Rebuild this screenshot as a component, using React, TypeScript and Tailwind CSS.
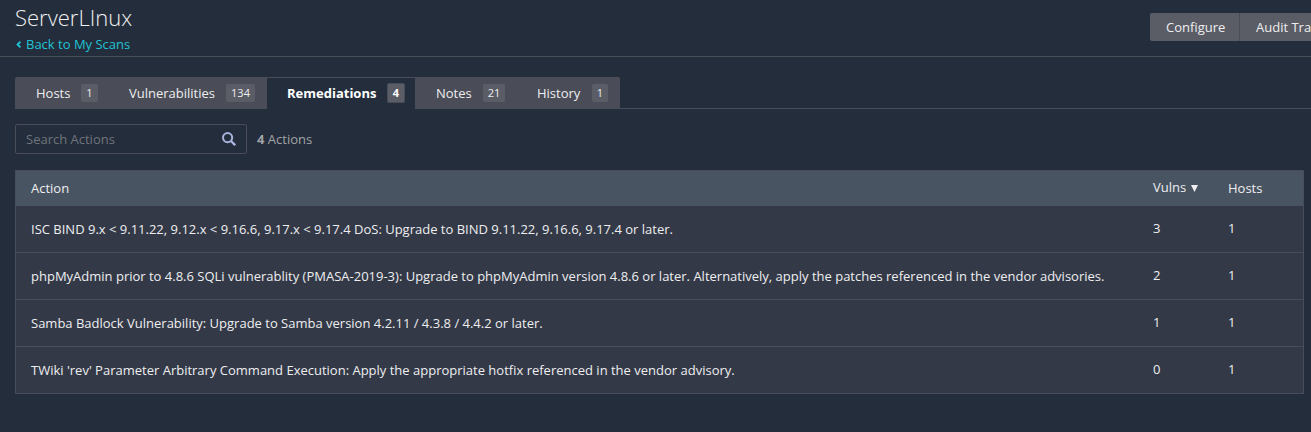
type Tab = { label: string; count: number; active?: boolean; box: string; badge: string };

const tabs: Tab[] = [
  { label: 'Hosts', count: 1, box: 'w-[94px] pl-[21px] rounded-tl-[2px]', badge: 'w-[17px] mr-[11px]' },
  { label: 'Vulnerabilities', count: 134, box: 'w-[158px] pl-[20px]', badge: 'w-[29px] mr-[12px]' },
  { label: 'Remediations', count: 4, active: true, box: 'w-[148px] pl-[20px]', badge: 'w-[18px] mr-[10px]' },
  { label: 'Notes', count: 21, box: 'w-[101px] pl-[21px]', badge: 'w-[22px] mr-[11px]' },
  { label: 'History', count: 1, box: 'w-[104px] pl-[21px] rounded-tr-[2px]', badge: 'w-[16px] mr-[12px]' },
];

const rows = [
  { action: 'ISC BIND 9.x < 9.11.22, 9.12.x < 9.16.6, 9.17.x < 9.17.4 DoS: Upgrade to BIND 9.11.22, 9.16.6, 9.17.4 or later.', vulns: 3, hosts: 1 },
  { action: 'phpMyAdmin prior to 4.8.6 SQLi vulnerablity (PMASA-2019-3): Upgrade to phpMyAdmin version 4.8.6 or later. Alternatively, apply the patches referenced in the vendor advisories.', vulns: 2, hosts: 1 },
  { action: 'Samba Badlock Vulnerability: Upgrade to Samba version 4.2.11 / 4.3.8 / 4.4.2 or later.', vulns: 1, hosts: 1 },
  { action: "TWiki 'rev' Parameter Arbitrary Command Execution: Apply the appropriate hotfix referenced in the vendor advisory.", vulns: 0, hosts: 1 },
];

function Header() {
  return (
    <header className="flex h-[57px] justify-between border-b border-[#475059] pl-[15px]">
      <div>
        <h1 className="mt-[2px] text-[22px] leading-[30px] font-light text-[#f0f1f2]">ServerLInux</h1>
        <a href="#" className="mt-[3px] flex items-center text-[13px] leading-[18px] text-[#20c3d6]">
          <svg className="mr-[4px] ml-px h-[7px] w-[6px]" viewBox="0 0 6 7" fill="none" stroke="currentColor" strokeWidth="1.9">
            <path d="M4.4 .7 1.6 3.5l2.8 2.8" />
          </svg>
          Back to My Scans
        </a>
      </div>
      <div className="mt-[13px] flex h-[28px] w-[161px] overflow-hidden rounded-l-[2px] bg-[#5b5d66] text-[13px] leading-[28px] whitespace-nowrap text-[#eeeef0]">
        <button className="w-[90px] shrink-0 border-r border-[#484d5a] pl-[16px] text-left">Configure</button>
        <button className="shrink-0 px-4">Audit Trail</button>
      </div>
    </header>
  );
}

function Tabs() {
  return (
    <nav className="ml-[15px] flex h-[32px] items-start">
      {tabs.map((t) => (
        <div
          key={t.label}
          className={`flex h-[32px] shrink-0 items-center justify-between border-t border-[#4a4d57] text-[13px] ${t.box} ${
            t.active ? 'font-bold text-white' : 'bg-[#4a4d57] text-[#eeeef0]'
          }`}
        >
          <span className="-mt-px leading-[18px]">{t.label}</span>
          <span
            className={`-mt-px flex items-center justify-center rounded-[2px] bg-[#5b5d66] text-[11px] ${t.badge} ${
              t.active ? 'h-[20px] border border-[#4a4d57]' : 'h-[18px]'
            }`}
          >
            {t.count}
          </span>
        </div>
      ))}
      <div className="h-[32px] flex-1 border-b border-[#4a4d57]" />
    </nav>
  );
}

function Search() {
  return (
    <div className="mt-[15px] ml-[15px] flex h-[30px] items-center text-[13px]">
      <div className="flex h-[30px] w-[232px] items-center justify-between rounded-[2px] border border-[#4a4d57] pr-[10px] pl-[10px]">
        <input
          className="w-[180px] bg-transparent pt-[2px] text-white outline-none placeholder:text-[#6f747b]"
          placeholder="Search Actions"
        />
        <svg className="h-[14px] w-[14px] text-[#a9b3dd]" viewBox="0 0 14 14" fill="none" stroke="currentColor" strokeWidth="2">
          <circle cx="5.6" cy="5.6" r="4.6" />
          <path d="m9 9 4.2 4.2" strokeWidth="2.4" />
        </svg>
      </div>
      <p className="ml-[10px] pt-[2px] text-[#a2a4a8]">
        <b>4</b> Actions
      </p>
    </div>
  );
}

function ActionTable() {
  return (
    <div className="mt-[16px] ml-[15px] w-[1289px] border border-[#484d5a] text-[13px] leading-[18px] text-[#eeeef0]">
      <div className="flex h-[35px] bg-[#485461]">
        <div className="w-[1137px] pt-[8px] pl-[15px]">Action</div>
        <div className="flex w-[75px] items-start pt-[7px]">
          Vulns
          <svg className="mt-[7px] ml-[5px] h-[7px] w-[7px]" viewBox="0 0 7 7" fill="currentColor">
            <path d="M0 0h7L3.5 7z" />
          </svg>
        </div>
        <div className="pt-[8px]">Hosts</div>
      </div>
      {rows.map((r) => (
        <div key={r.action} className="flex h-[47px] border-b border-[#484d5a] bg-[#333947] last:h-[46px] last:border-b-0">
          <div className="w-[1137px] pt-[14px] pl-[15px] whitespace-nowrap">{r.action}</div>
          <div className="w-[75px] pt-[13px]">{r.vulns}</div>
          <div className="pt-[13px]">{r.hosts}</div>
        </div>
      ))}
    </div>
  );
}

export default function App() {
  return (
    <div className="h-[432px] w-[1311px] overflow-hidden bg-[#242d3b] font-['Open_Sans',sans-serif]">
      <Header />
      <main className="pt-[20px]">
        <Tabs />
        <Search />
        <ActionTable />
      </main>
    </div>
  );
}
